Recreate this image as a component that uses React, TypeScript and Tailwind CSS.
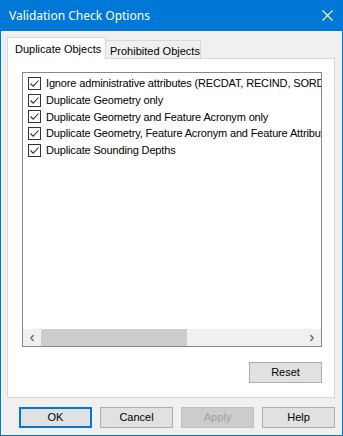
import { ChevronLeft, ChevronRight } from "lucide-react";

const ITEMS = [
  "Ignore administrative attributes (RECDAT, RECIND, SORDAT, SORIND)",
  "Duplicate Geometry only",
  "Duplicate Geometry and Feature Acronym only",
  "Duplicate Geometry, Feature Acronym and Feature Attributes",
  "Duplicate Sounding Depths",
];

function CheckBox() {
  return (
    <span className="flex h-[13px] w-[13px] shrink-0 items-center justify-center border border-[#333333] bg-white">
      <svg width="11" height="11" viewBox="0 0 11 11" fill="none">
        <path d="M1.5 5.5 L4.2 8.2 L9.5 2.5" stroke="#333333" strokeWidth="1.1" />
      </svg>
    </span>
  );
}

function Button({ label, variant }: { label: string; variant?: "default" | "disabled" }) {
  const base = "flex h-[21px] w-[73px] items-center justify-center";
  if (variant === "default")
    return <div className={`${base} border-2 border-[#0078d7] bg-[#e1e1e1] text-black`}>{label}</div>;
  if (variant === "disabled")
    return <div className={`${base} border border-[#bfbfbf] bg-[#cccccc] text-[#a0a0a0]`}>{label}</div>;
  return <div className={`${base} border border-[#adadad] bg-[#e1e1e1] text-black`}>{label}</div>;
}

export default function App() {
  return (
    <div className="flex h-[436px] w-[343px] flex-col bg-[#0078d7] px-px pb-px font-['Liberation_Sans',Arial,sans-serif] text-[11px] text-black">
      {/* title bar */}
      <div className="flex h-[31px] shrink-0 items-center justify-between pl-[8px] pr-[9px] font-['Noto_Sans',sans-serif] text-[12px] text-white">
        <span>Validation Check Options</span>
        <svg width="11" height="11" viewBox="0 0 11 11">
          <path d="M0.5 0.5 L10.5 10.5 M10.5 0.5 L0.5 10.5" stroke="white" strokeWidth="1.1" />
        </svg>
      </div>

      <div className="flex flex-1 flex-col bg-[#f0f0f0] pl-[6px] pt-[6px]">
        {/* tabs */}
        <div className="flex items-end">
          <div className="relative z-10 -mb-px flex h-[22px] w-[99px] items-start border border-b-0 border-[#d9d9d9] bg-white pl-[7px] pt-[3px]">
            Duplicate Objects
          </div>
          <div className="flex h-[18px] w-[95px] items-start border border-b-0 border-l-0 border-[#d9d9d9] bg-[#f0f0f0] pl-[4px] pt-[2px]">
            Prohibited Objects
          </div>
        </div>

        {/* tab panel */}
        <div className="flex h-[340px] w-[328px] flex-col border border-[#d9d9d9] bg-white pl-[14px] pt-[13px]">
          <div className="flex h-[275px] w-[300px] flex-col border border-[#828790] bg-white">
            <div className="flex-1 overflow-hidden pl-[5px] pt-[2px] tracking-[-0.15px]">
              {ITEMS.map((t) => (
                <div key={t} className="flex h-[16.75px] items-center gap-[5px] whitespace-nowrap">
                  <CheckBox />
                  <span>{t}</span>
                </div>
              ))}
            </div>
            {/* horizontal scrollbar */}
            <div className="flex h-[17px] items-center bg-[#f0f0f0]">
              <div className="flex h-full w-[18px] items-center justify-center text-[#606060]">
                <ChevronLeft size={10} strokeWidth={3} />
              </div>
              <div className="h-full w-[146px] bg-[#cdcdcd]" />
              <div className="flex-1" />
              <div className="flex h-full w-[18px] items-center justify-center text-[#606060]">
                <ChevronRight size={10} strokeWidth={3} />
              </div>
            </div>
          </div>
          <div className="mt-[15px] flex w-[300px] justify-end">
            <Button label="Reset" />
          </div>
        </div>

        {/* bottom buttons */}
        <div className="mt-[9px] flex gap-[8px] pl-[12px]">
          <Button label="OK" variant="default" />
          <Button label="Cancel" />
          <Button label="Apply" variant="disabled" />
          <Button label="Help" />
        </div>
      </div>
    </div>
  );
}
